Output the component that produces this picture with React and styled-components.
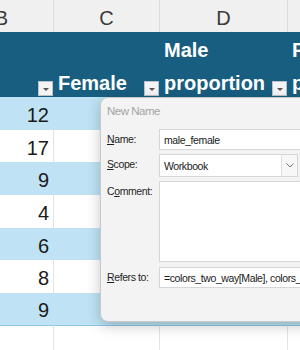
import React from "react";
import styled, { createGlobalStyle } from "styled-components";

const columns = ["B", "C", "D", "E"];
const values = [12, 17, 9, 4, 6, 8, 9];

const Global = createGlobalStyle`
  html, body {
    margin: 0;
    padding: 0;
    background: #ffffff;
    overflow: hidden;
  }
  body {
    width: 300px;
    height: 350px;
    font-family: "Liberation Sans", Arial, sans-serif;
  }
`;

const Page = styled.div`
  position: relative;
  width: 300px;
  height: 350px;
  overflow: hidden;
`;

const Sheet = styled.div`
  display: grid;
  grid-template-columns: 104px 106px 128px 110px;
  margin-left: -50px;
  width: 448px;
`;

const ColHead = styled.div`
  height: 32px;
  background: #f0f0f0;
  border-right: 1px solid #dcdcdc;
  box-sizing: border-box;
  display: flex;
  align-items: center;
  justify-content: center;
  padding-top: 4px;
  font-size: 20px;
  color: #3a3a3a;
`;

const HeadCell = styled.div`
  height: 65px;
  background: #185e80;
  box-sizing: border-box;
  display: flex;
  align-items: flex-end;
  padding: 0 1px 1px 4px;
  gap: 2px;
`;

const HeadText = styled.span`
  flex: 1;
  color: #ffffff;
  font-weight: bold;
  font-size: 20px;
  line-height: 33px;
  margin-bottom: -4px;
  overflow: hidden;
`;

const Filter = styled.div`
  flex: none;
  width: 15px;
  height: 15px;
  box-sizing: border-box;
  background: #f4f4f4;
  border: 1px solid #b9c4ca;
  display: flex;
  align-items: center;
  justify-content: center;
  &::after {
    content: "";
    margin-top: 2px;
    border-left: 3px solid transparent;
    border-right: 3px solid transparent;
    border-top: 3px solid #555;
  }
`;

const Cell = styled.div`
  height: 32.7px;
  box-sizing: border-box;
  background: ${(p) => (p.$band ? "#bfe3f4" : "#ffffff")};
  border-right: 1px solid ${(p) => (p.$band ? "#bfe3f4" : "#e3e3e3")};
  border-bottom: ${(p) => (p.$last ? "1px solid #8cc8e6" : "none")};
  display: flex;
  align-items: center;
  justify-content: flex-end;
  padding: 4px 4px 0 0;
  font-size: 20px;
  color: #1a1a1a;
`;

const EmptyCell = styled.div`
  height: 30px;
  border-right: 1px solid #e3e3e3;
  box-sizing: border-box;
`;

const Dialog = styled.div`
  position: absolute;
  left: 100px;
  top: 97px;
  width: 260px;
  height: 225px;
  box-sizing: border-box;
  background: #f3f3f3;
  border: 1px solid #c9c9c9;
  border-radius: 8px;
  box-shadow: 0 4px 14px rgba(0, 0, 0, 0.22);
  padding: 5px 0 0 6px;
  font-family: "Liberation Sans", Arial, sans-serif;
  font-size: 10.5px;
  letter-spacing: -0.4px;
  color: #1f1f1f;
`;

const Title = styled.div`
  font-size: 11.5px;
  letter-spacing: -0.5px;
  color: #a3a3a3;
  height: 22px;
  line-height: 16px;
  margin-bottom: 4px;
`;

const Form = styled.div`
  display: grid;
  grid-template-columns: 52px 1fr;
  row-gap: 4px;
  align-items: start;
`;

const Label = styled.label`
  line-height: 21px;
  white-space: nowrap;
  margin-top: ${(p) => p.$mt || 0}px;
  span {
    text-decoration: underline;
  }
`;

const Field = styled.div`
  height: ${(p) => p.$h || 21}px;
  margin-top: ${(p) => p.$mt || 0}px;
  box-sizing: border-box;
  background: #ffffff;
  border: 1px solid #d6d6d6;
  display: flex;
  align-items: center;
  padding-left: 4px;
  white-space: nowrap;
  overflow: hidden;
  color: #1a1a1a;
`;

const Select = styled(Field)`
  width: 139px;
  padding-right: 0;
  justify-content: space-between;
`;

const Caret = styled.div`
  width: 16px;
  height: 100%;
  box-sizing: border-box;
  border-left: 1px solid #dedede;
  background: #f7f7f7;
  display: flex;
  align-items: center;
  justify-content: center;
`;

export default function App() {
  return (
    <Page>
      <Global />
      <Sheet>
        {columns.map((c) => (
          <ColHead key={c}>{c}</ColHead>
        ))}
        <HeadCell>
          <HeadText />
          <Filter />
        </HeadCell>
        <HeadCell>
          <HeadText>Female</HeadText>
          <Filter />
        </HeadCell>
        <HeadCell>
          <HeadText>Male proportion</HeadText>
          <Filter />
        </HeadCell>
        <HeadCell>
          <HeadText>Female proportion</HeadText>
        </HeadCell>
        {values.map((v, i) =>
          columns.map((c, j) => (
            <Cell key={`${i}-${c}`} $band={i % 2 === 0} $last={i === values.length - 1}>
              {j === 0 ? v : ""}
            </Cell>
          ))
        )}
        {columns.map((c) => (
          <EmptyCell key={`e-${c}`} />
        ))}
      </Sheet>
      <Dialog>
        <Title>New Name</Title>
        <Form>
          <Label>
            <span>N</span>ame:
          </Label>
          <Field>male_female</Field>
          <Label>
            <span>S</span>cope:
          </Label>
          <Select $h={23}>
            Workbook
            <Caret>
              <svg width="8" height="5" viewBox="0 0 8 5">
                <path d="M0.5 0.5 L4 4 L7.5 0.5" fill="none" stroke="#777" strokeWidth="1" />
              </svg>
            </Caret>
          </Select>
          <Label>
            C<span>o</span>mment:
          </Label>
          <Field $h={81} />
          <Label $mt={1}>
            <span>R</span>efers to:
          </Label>
          <Field $mt={1}>=colors_two_way[Male], colors_two_way[Female]</Field>
        </Form>
      </Dialog>
    </Page>
  );
}
